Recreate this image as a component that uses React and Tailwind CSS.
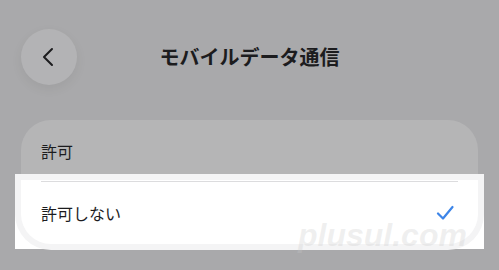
export default function App() {
  return (
    <div
      className="relative w-[499px] h-[270px] overflow-hidden bg-[#a9a9ab] text-[#1c1c1e]"
      style={{ fontFamily: '"Noto Sans CJK JP", "Noto Sans", sans-serif' }}
    >
      {/* header */}
      <div className="grid grid-cols-[1fr_auto_1fr] items-center pt-[29px] px-[21px]">
        <div className="flex">
          <button className="w-[56px] h-[56px] rounded-full bg-[#b3b3b5] flex items-center justify-center shadow-[0_4px_12px_rgba(0,0,0,0.06)]">
            <svg width="14" height="20" viewBox="0 0 14 20" fill="none" className="-ml-[2px]">
              <path
                d="M11 2 L3 10 L11 18"
                stroke="#1c1c1e"
                strokeWidth="2"
                strokeLinecap="round"
                strokeLinejoin="round"
              />
            </svg>
          </button>
        </div>
        <h1 className="text-[20px] font-bold leading-none -mt-[1px]">モバイルデータ通信</h1>
        <div />
      </div>

      {/* options */}
      <div className="mt-[35px] mx-[21px] flex flex-col">
        <div className="h-[60px] bg-[#b5b5b6] rounded-t-[30px] flex items-center px-[20px] pt-[2px]">
          <span className="text-[16px] leading-none">許可</span>
        </div>
        <div className="-mx-[6px] bg-white pb-[5px]">
          <div className="mx-[6px] bg-white rounded-b-[30px] shadow-[0_0_0_6px_#f4f4f5]">
            <div className="mx-[20px] pt-[1px]">
              <div className="h-[1px] bg-[#dcdcde]" />
            </div>
            <div className="h-[62px] flex items-center justify-between pl-[20px] pr-[24px]">
              <span className="text-[16px] leading-none">許可しない</span>
              <svg width="18" height="16" viewBox="0 0 18 16" fill="none">
                <path
                  d="M2 8.5 L7 13.5 L16.5 2"
                  stroke="#3d85e8"
                  strokeWidth="2.2"
                  strokeLinecap="round"
                  strokeLinejoin="round"
                />
              </svg>
            </div>
          </div>
        </div>
      </div>

      {/* watermark */}
      <div
        className="absolute left-[298px] top-[219px] text-[32px] font-bold italic leading-none text-[rgba(200,200,200,0.28)] pointer-events-none"
        style={{ fontFamily: '"Liberation Sans", Arial, sans-serif' }}
      >
        plusul.com
      </div>
    </div>
  );
}
